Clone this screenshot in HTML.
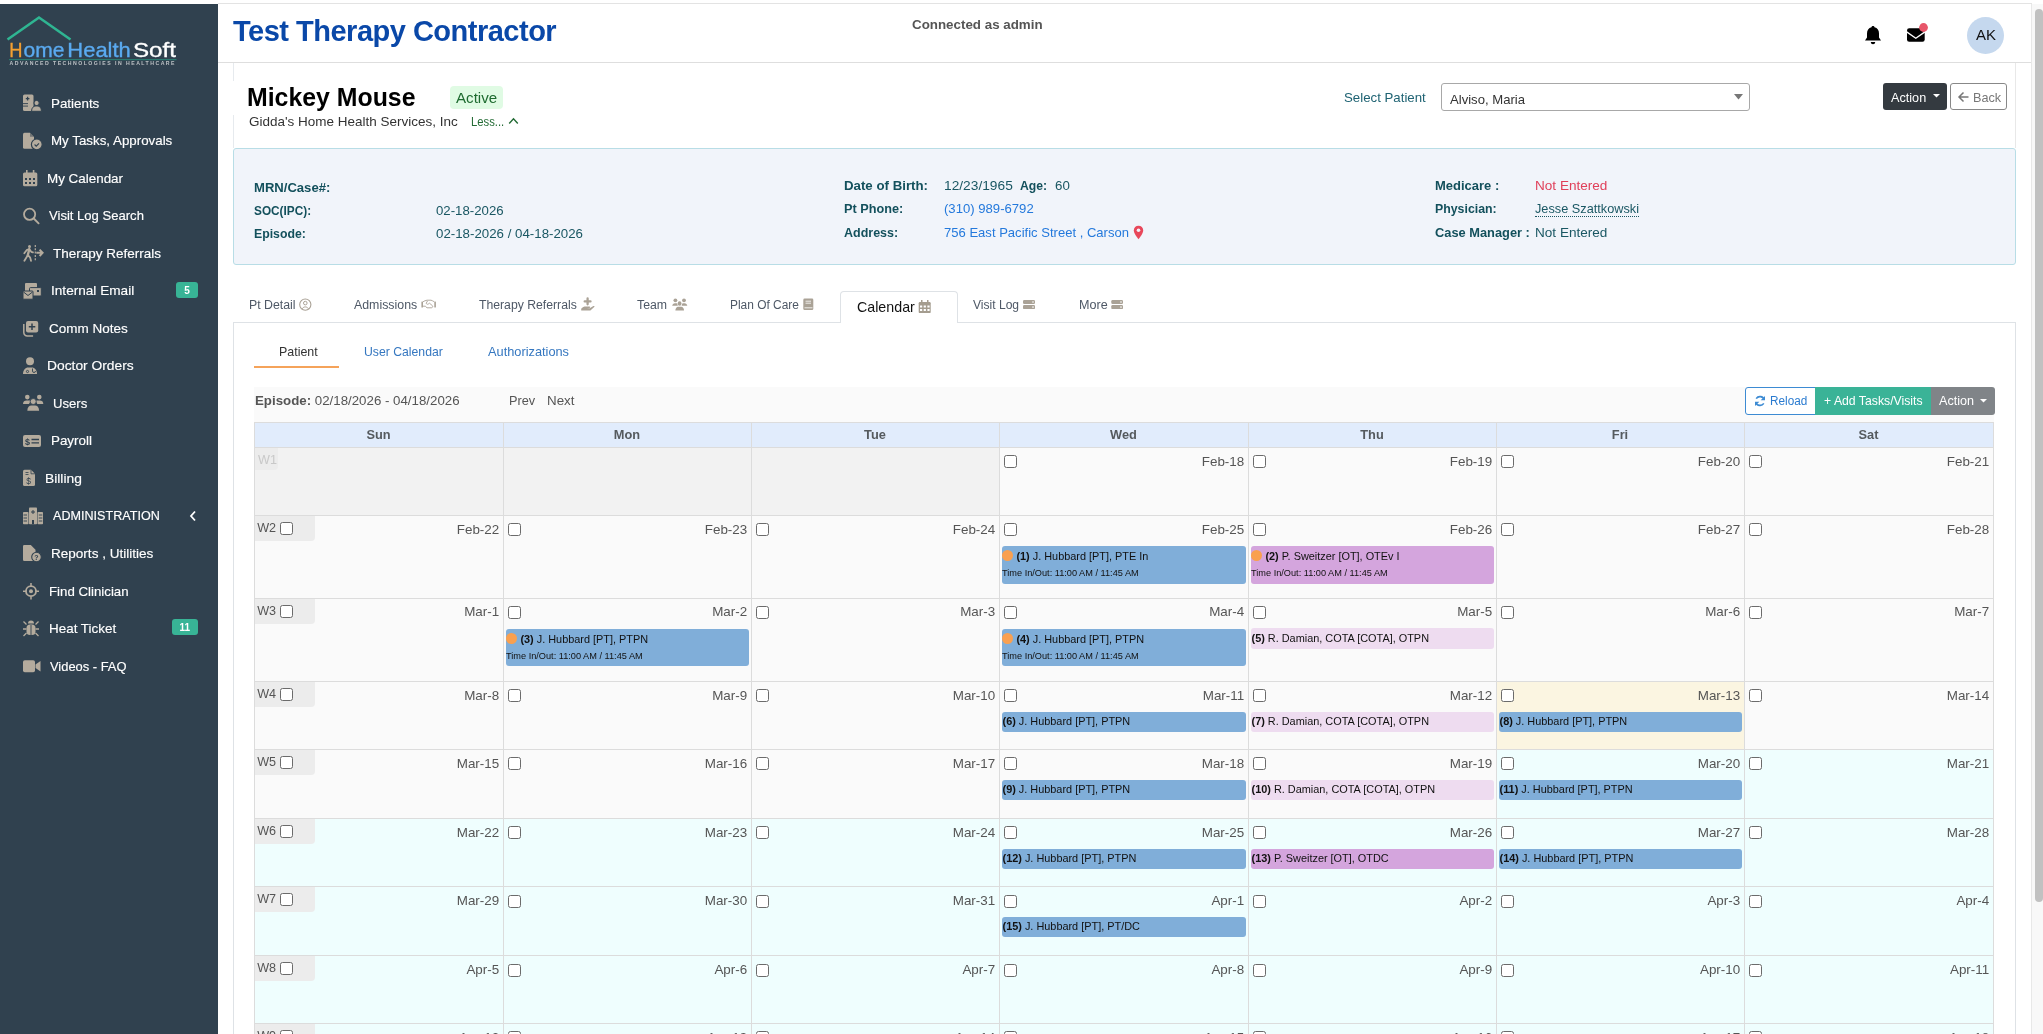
<!DOCTYPE html>
<html><head><meta charset="utf-8">
<style>
*{box-sizing:border-box;margin:0;padding:0}
html,body{width:2043px;height:1034px;overflow:hidden;background:#fff;font-family:"Liberation Sans",sans-serif;color:#212529}
.a{position:absolute}
.t{position:absolute;white-space:nowrap;line-height:1}
#topline{left:218px;top:3px;width:1814px;height:1px;background:#e3e3e3}
#side{left:0;top:4px;width:218px;height:1030px;background:#30414f}
#sbtrack{left:2031px;top:4px;width:12px;height:1030px;background:#f8f8f8;border-left:1px solid #e8e8e8}
#sbthumb{left:2035px;top:9px;width:8px;height:893px;background:#c1c1c1;border-radius:4px}
#hdrline{left:218px;top:62px;width:1813px;height:1px;background:#dedede}
.nav{position:absolute;white-space:nowrap;line-height:1;color:#fff;font-size:13.5px;-webkit-text-stroke:0.15px #fff}
.badge{position:absolute;background:#38b496;color:#fff;font-size:10px;font-weight:bold;text-align:center;border-radius:3px;line-height:17px;height:16px}
.lbl{position:absolute;white-space:nowrap;line-height:1;font-size:13.1px;font-weight:bold;color:#13505c}
.val{position:absolute;white-space:nowrap;line-height:1;font-size:13.3px;color:#1a5763}
.tab{position:absolute;white-space:nowrap;line-height:1;font-size:12.3px;color:#4e5866}
.ch{height:25px;line-height:26px;text-align:center;font-weight:bold;font-size:12.8px;color:#555a5e}
.dt{text-align:right;font-size:13.4px;line-height:1;color:#555}
.cb{width:13px;height:13px;border:1px solid #6b6b6b;border-radius:2.5px;background:#fff}
.wl{background:#ececec;border-radius:0 0 4px 0;font-size:12.6px;color:#555;line-height:1}
.wl span{position:absolute;left:3px}
.ev{border-radius:3px;overflow:hidden;color:#111;white-space:nowrap}
.et{position:absolute;font-size:10.9px;line-height:1}
.tio{position:absolute;left:0;font-size:9.2px;line-height:1}
.dot{position:absolute;width:11px;height:11px;border-radius:50%;background:#f9a050}
</style></head>
<body>
<div id="root" style="position:absolute;left:0;top:0;width:2043px;height:1034px;overflow:hidden;will-change:transform">
<div id="topline" class="a"></div>
<div id="side" class="a"></div>
<div id="hdrline" class="a"></div>

<!-- logo -->
<svg class="a" style="left:0;top:0" width="218" height="80" viewBox="0 0 218 80">
  <polyline points="7.5,39.5 39,17.5 70.5,39.5" fill="none" stroke="#2fb592" stroke-width="2.6" stroke-linejoin="miter"/>
  <g font-family="Liberation Sans" font-size="21" stroke-width="0.35" lengthAdjust="spacingAndGlyphs">
  <text x="9.2" y="57" fill="#f5a030" stroke="#f5a030" textLength="13.2" lengthAdjust="spacingAndGlyphs">H</text>
  <text x="23.6" y="57" fill="#5aaaf0" stroke="#5aaaf0" textLength="41" lengthAdjust="spacingAndGlyphs">ome</text>
  <text x="67.3" y="57" fill="#5aaaf0" stroke="#5aaaf0" textLength="63.5" lengthAdjust="spacingAndGlyphs">Health</text>
  <text x="133" y="57" fill="#ffffff" stroke="#ffffff" textLength="43" lengthAdjust="spacingAndGlyphs">Soft</text>
  </g>
  <rect x="9" y="59" width="167.5" height="1.2" fill="#2a7a70"/>
  <text x="9.5" y="65.3" font-family="Liberation Sans" font-size="5.2" font-weight="bold" fill="#bcc0c4" textLength="165" lengthAdjust="spacing">ADVANCED TECHNOLOGIES IN HEALTHCARE</text>
</svg>

<!-- nav -->
<svg class="a" style="left:0;top:0" width="218" height="700" viewBox="0 0 218 700">
<g fill="#b4ab9d">
  <!-- Patients -->
  <rect x="23" y="94.5" width="10.5" height="16.5" rx="1.5"/>
  <path d="M22.5 103.6h5.5M22.5 106.1h5.5" stroke="#30414f" stroke-width="0.9"/>
  <path d="M27.6 96.8v3.6M25.8 98.6h3.6" stroke="#30414f" stroke-width="1.3"/>
  <circle cx="36.6" cy="103" r="2.6" stroke="#30414f" stroke-width="1"/>
  <path d="M31.6 111.3 C31.6 107.5 33.5 106 36.6 106 C39.7 106 41.4 107.5 41.4 111.3Z" stroke="#30414f" stroke-width="1"/>
  <!-- My Tasks -->
  <path d="M24.5 132.8h5.5l4 4v12h-9.5a1.5 1.5 0 0 1-1.5-1.5v-13a1.5 1.5 0 0 1 1.5-1.5z"/>
  <path d="M30 132.8v4h4z" fill="#30414f" opacity="0.5"/>
  <circle cx="36.8" cy="144.4" r="5.4" stroke="#30414f" stroke-width="1.2"/>
  <path d="M34.6 144.5l1.6 1.6 2.8-2.8" fill="none" stroke="#30414f" stroke-width="1.1"/>
  <!-- My Calendar -->
  <rect x="23" y="172.5" width="14.3" height="13.7" rx="1.5"/>
  <rect x="26" y="170" width="1.6" height="3"/><rect x="32.8" y="170" width="1.6" height="3"/>
  <g fill="#30414f"><rect x="25" y="178" width="2" height="2"/><rect x="29" y="178" width="2" height="2"/><rect x="33" y="178" width="2" height="2"/><rect x="25" y="182" width="2" height="2"/><rect x="29" y="182" width="2" height="2"/><rect x="33" y="182" width="2" height="2"/></g>
  <!-- Search -->
  <circle cx="29.6" cy="214.3" r="5.6" fill="none" stroke="#b4ab9d" stroke-width="1.8"/>
  <path d="M33.8 218.5l4.8 4.8" stroke="#b4ab9d" stroke-width="1.9" stroke-linecap="round"/>
  <!-- Therapy Referrals -->
  <circle cx="29.5" cy="246.4" r="1.5"/>
  <path d="M29.3 249.2L27.8 255" stroke="#b4ab9d" stroke-width="2.4" stroke-linecap="round"/>
  <path d="M24.3 253.2l2.3-3 2.7-1 2 2.6 1.6 0.6M27.9 255l2.3 2.6 0.8 3.2M27.6 255.5l-3.2 5.3" fill="none" stroke="#b4ab9d" stroke-width="1.8" stroke-linecap="round" stroke-linejoin="round"/>
  <path d="M35.3 245v16" stroke="#b4ab9d" stroke-width="1.2" stroke-dasharray="2 1.3"/>
  <path d="M36.3 252.8h5.8M39.6 249.6l3 3.2-3 3.2" fill="none" stroke="#b4ab9d" stroke-width="2"/>
  <!-- Internal Email -->
  <rect x="25" y="283" width="12" height="9" rx="1"/>
  <rect x="29.5" y="287.6" width="11.8" height="8.4" rx="1" stroke="#30414f" stroke-width="1"/>
  <rect x="37" y="290" width="2" height="2" fill="#30414f"/>
  <rect x="23" y="291" width="10" height="8.2" rx="0.8" stroke="#30414f" stroke-width="1"/>
  <path d="M23.5 292l4.5 3.5 4.5-3.5" fill="none" stroke="#30414f" stroke-width="1"/>
  <!-- Comm Notes -->
  <path d="M23.8 324v8.5a3.5 3.5 0 0 0 3.5 3.5h5.8" fill="none" stroke="#b4ab9d" stroke-width="1.5"/>
  <rect x="26" y="320.9" width="12.2" height="11.7" rx="2"/>
  <path d="M32 323.5v6.5M28.8 326.8h6.5" stroke="#30414f" stroke-width="1.5"/>
  <!-- Doctor Orders -->
  <circle cx="30" cy="361.3" r="4"/>
  <path d="M23 374c0-4 2.5-6.5 5-6.5h4c2.5 0 5 2.5 5 6.5z"/>
  <circle cx="27.5" cy="371.5" r="1.1" fill="none" stroke="#30414f" stroke-width="0.9"/>
  <path d="M32.5 368.5v2.5a1.5 1.5 0 0 0 3 0" fill="none" stroke="#30414f" stroke-width="0.9"/>
  <!-- Users -->
  <circle cx="27.3" cy="397.1" r="2.3"/><circle cx="39.3" cy="397.1" r="2.3"/>
  <path d="M23 404c0-2.5 1.5-3.5 3.5-3.5h2.5c1 0 1.5 0.5 1.5 0.5l-1.5 3z"/>
  <path d="M43.3 404c0-2.5-1.5-3.5-3.5-3.5h-2.5c-1 0-1.5 0.5-1.5 0.5l1.5 3z"/>
  <circle cx="33.2" cy="401.5" r="3" stroke="#30414f" stroke-width="0.8"/>
  <path d="M27.3 410.7c0-3.5 2-5.2 4-5.2h3.8c2 0 4 1.7 4 5.2z"/>
  <!-- Payroll -->
  <rect x="23" y="434.9" width="18" height="12.1" rx="2"/>
  <text x="25" y="445" font-family="Liberation Sans" font-size="9" font-weight="bold" fill="#30414f">$</text>
  <path d="M31.5 439.5h7.5M31.5 442.8h7.5" stroke="#30414f" stroke-width="1.3"/>
  <!-- Billing -->
  <path d="M24.5 469.8h6.5l4 4v10.7a1.5 1.5 0 0 1-1.5 1.5h-9a1.5 1.5 0 0 1-1.5-1.5v-13.2a1.5 1.5 0 0 1 1.5-1.5z"/>
  <path d="M31 469.8v4h4" fill="none" stroke="#30414f" stroke-width="0.8"/>
  <path d="M25.5 472.5h3M25.5 474.5h3" stroke="#30414f" stroke-width="0.8"/>
  <text x="26.3" y="484" font-family="Liberation Sans" font-size="8.5" fill="#30414f">$</text>
  <!-- Administration -->
  <rect x="23" y="512" width="5.5" height="12.2" rx="0.8"/>
  <rect x="37.5" y="512" width="5.5" height="12.2" rx="0.8"/>
  <rect x="29" y="507.6" width="8" height="16.6" rx="0.8"/>
  <path d="M23.5 515h3.5M23.5 518h3.5M23.5 521h3.5M38.8 515h3.5M38.8 518h3.5M38.8 521h3.5" stroke="#30414f" stroke-width="0.9"/>
  <path d="M33 510v4M31 512h4" stroke="#30414f" stroke-width="1"/>
  <rect x="32" y="520" width="2" height="4.2" fill="#30414f"/>
  <!-- Reports -->
  <path d="M24.3 545h6.5l4.7 4.7v11.4h-11.2a1.3 1.3 0 0 1-1.3-1.3v-13.5a1.3 1.3 0 0 1 1.3-1.3z"/>
  <circle cx="36.5" cy="557" r="4.8" stroke="#30414f" stroke-width="1.1"/>
  <text x="34.2" y="560" font-family="Liberation Sans" font-size="7" font-weight="bold" fill="#30414f">?</text>
  <!-- Find Clinician -->
  <circle cx="31" cy="591.2" r="5" fill="none" stroke="#b4ab9d" stroke-width="1.8"/>
  <circle cx="31" cy="591.2" r="2"/>
  <path d="M31 583v3M31 596.5v3M23 591.2h3M36 591.2h3" stroke="#b4ab9d" stroke-width="1.5"/>
  <!-- Heat Ticket bug -->
  <path d="M28 623.5a3 3 0 0 1 6 0z"/>
  <rect x="26.5" y="624.5" width="9" height="10.5" rx="3.5"/>
  <path d="M31 625v10" stroke="#30414f" stroke-width="0.9"/>
  <path d="M23.5 621.5l3 3M38.5 621.5l-3 3M23 629h3.5M39 629h-3.5M23.5 636l3-3M38.5 636l-3-3" stroke="#b4ab9d" stroke-width="1.3"/>
  <!-- Videos -->
  <rect x="23" y="660.3" width="12" height="11.9" rx="1.8"/>
  <path d="M35.5 664.5l5-3.5v10.5l-5-3.5z"/>
</g>
</svg>

<div class="nav" style="left:51px;top:96.5px;transform:scaleX(0.9901);transform-origin:0 0">Patients</div>
<div class="nav" style="left:51px;top:134px;transform:scaleX(0.9877);transform-origin:0 0">My Tasks, Approvals</div>
<div class="nav" style="left:46.5px;top:171.5px;transform:scaleX(0.9931);transform-origin:0 0">My Calendar</div>
<div class="nav" style="left:48.5px;top:209px;transform:scaleX(0.9678);transform-origin:0 0">Visit Log Search</div>
<div class="nav" style="left:52.8px;top:246.7px;transform:scaleX(0.9996);transform-origin:0 0">Therapy Referrals</div>
<div class="nav" style="left:51.2px;top:284.2px;transform:scaleX(1.0079);transform-origin:0 0">Internal Email</div>
<div class="nav" style="left:48.9px;top:321.8px;transform:scaleX(0.9992);transform-origin:0 0">Comm Notes</div>
<div class="nav" style="left:46.7px;top:359.3px;transform:scaleX(1.0226);transform-origin:0 0">Doctor Orders</div>
<div class="nav" style="left:52.9px;top:396.9px;transform:scaleX(0.9726);transform-origin:0 0">Users</div>
<div class="nav" style="left:51.2px;top:434.4px;transform:scaleX(0.9911);transform-origin:0 0">Payroll</div>
<div class="nav" style="left:44.5px;top:472px;transform:scaleX(1.0241);transform-origin:0 0">Billing</div>
<div class="nav" style="left:52.5px;top:510.1px;font-size:12.7px;transform:scaleX(0.9925);transform-origin:0 0">ADMINISTRATION</div>
<div class="nav" style="left:51.2px;top:547px;transform:scaleX(1.0026);transform-origin:0 0">Reports , Utilities</div>
<div class="nav" style="left:48.9px;top:584.6px;transform:scaleX(0.9821);transform-origin:0 0">Find Clinician</div>
<div class="nav" style="left:48.9px;top:622.1px;transform:scaleX(0.9951);transform-origin:0 0">Heat Ticket</div>
<div class="nav" style="left:50.3px;top:659.7px;transform:scaleX(0.9557);transform-origin:0 0">Videos - FAQ</div>
<div class="badge" style="left:176px;top:282px;width:22px">5</div>
<div class="badge" style="left:171.5px;top:619px;width:26.5px">11</div>
<svg class="a" style="left:189px;top:510px" width="8" height="12"><polyline points="6,1.5 2,6 6,10.5" fill="none" stroke="#fff" stroke-width="1.8"/></svg>

<!-- header -->
<div class="t" style="left:233px;top:16.8px;font-size:29px;letter-spacing:-0.5px;font-weight:bold;color:#0a48a8">Test Therapy Contractor</div>
<div class="t" style="left:911.5px;top:18px;font-size:13.3px;font-weight:bold;color:#555;transform:scaleX(1.0043);transform-origin:0 0">Connected as admin</div>

<!-- patient header -->
<div class="a" style="left:233px;top:63px;width:1px;height:18px;background:#e6eaee"></div>
<div class="a" style="left:233px;top:115px;width:1px;height:33px;background:#e6eaee"></div>
<div class="a" style="left:2015px;top:63px;width:1px;height:85px;background:#e8e8e8"></div>
<div class="t" style="left:246.5px;top:85.6px;font-size:24.85px;font-weight:bold;color:#000;transform:scaleX(1.0003);transform-origin:0 0">Mickey Mouse</div>
<div class="a" style="left:450px;top:86px;width:53px;height:23px;background:#e0fbe4;border-radius:4px"></div>
<div class="t" style="left:455.5px;top:90.3px;font-size:15px;color:#1e6b30;transform:scaleX(1.0083);transform-origin:0 0">Active</div>
<div class="t" style="left:249.3px;top:114.6px;font-size:13.4px;color:#333;transform:scaleX(1.0071);transform-origin:0 0">Gidda's Home Health Services, Inc</div>
<div class="t" style="left:470.8px;top:115.8px;font-size:12px;color:#236b35;transform:scaleX(0.9389);transform-origin:0 0">Less...</div>
<svg class="a" style="left:508px;top:116px" width="12" height="9"><polyline points="1.2,7.5 5.5,2.8 9.8,7.5" fill="none" stroke="#236b35" stroke-width="1.4"/></svg>

<div class="t" style="left:1344.4px;top:90.6px;font-size:13.2px;color:#1f6373;transform:scaleX(1.0052);transform-origin:0 0">Select Patient</div>
<div class="a" style="left:1441px;top:83px;width:309px;height:28px;border:1px solid #a8a8a8;border-radius:3px;background:#fff"></div>
<div class="t" style="left:1450.2px;top:92.5px;font-size:13.1px;color:#333;transform:scaleX(1.0006);transform-origin:0 0">Alviso, Maria</div>
<svg class="a" style="left:1734px;top:94px" width="10" height="7"><polygon points="0,0 9,0 4.5,5.5" fill="#777"/></svg>
<div class="a" style="left:1883px;top:83px;width:64px;height:27px;background:#343a40;border-radius:3px"></div>
<div class="t" style="left:1891px;top:91.7px;font-size:12.6px;color:#fff;transform:scaleX(1.0053);transform-origin:0 0">Action</div>
<svg class="a" style="left:1932.5px;top:93.5px" width="8" height="5"><polygon points="0,0 7,0 3.5,3.5" fill="#fff"/></svg>
<div class="a" style="left:1950px;top:83px;width:57px;height:27px;border:1px solid #888;border-radius:3px;background:#fff"></div>
<svg class="a" style="left:1957px;top:91px" width="13" height="12"><path d="M11.5 6H2M6.5 1.5L2 6l4.5 4.5" fill="none" stroke="#777" stroke-width="1.5"/></svg>
<div class="t" style="left:1972.7px;top:91.6px;font-size:12.7px;color:#777;transform:scaleX(0.9993);transform-origin:0 0">Back</div>

<!-- header icons -->
<svg class="a" style="left:1862px;top:24px" width="22" height="22" viewBox="0 0 22 22"><path d="M11 2 C12 2 12.5 2.7 12.5 3.3 C15.5 4 17 6.5 17 9.5 L17 13.5 L19 16.5 L3 16.5 L5 13.5 L5 9.5 C5 6.5 6.5 4 9.5 3.3 C9.5 2.7 10 2 11 2 Z" fill="#000"/><path d="M8.8 18 L13.2 18 C13.2 19.3 12.2 20.3 11 20.3 C9.8 20.3 8.8 19.3 8.8 18Z" fill="#000"/></svg>
<svg class="a" style="left:1900px;top:20px" width="32" height="26" viewBox="1900 20 32 26"><rect x="1907" y="28.2" width="17.7" height="13.6" rx="2.2" fill="#000"/><polyline points="1906.3,31.6 1915.8,38.3 1925.3,31.6" fill="none" stroke="#fff" stroke-width="1.3"/><circle cx="1923.5" cy="27.5" r="4.4" fill="#e8566a"/></svg>
<div class="a" style="left:1967px;top:17px;width:37px;height:37px;border-radius:50%;background:#c5d8ee"></div>
<div class="t" style="left:1967.5px;top:27.2px;width:37px;text-align:center;font-size:15px;color:#111">AK</div>

<!-- info panel -->
<div class="a" style="left:233px;top:148px;width:1783px;height:117px;background:#f1f4fa;border:1px solid #b8dde6;border-radius:3px"></div>
<div class="lbl" style="left:254.4px;top:181.2px;transform:scaleX(0.9986);transform-origin:0 0">MRN/Case#:</div>
<div class="lbl" style="left:254.4px;top:204.1px;transform:scaleX(0.9021);transform-origin:0 0">SOC(IPC):</div>
<div class="lbl" style="left:254.4px;top:227px;transform:scaleX(0.9386);transform-origin:0 0">Episode:</div>
<div class="val" style="left:435.6px;top:204.1px;transform:scaleX(0.9937);transform-origin:0 0">02-18-2026</div>
<div class="val" style="left:435.6px;top:227px;transform:scaleX(0.9992);transform-origin:0 0">02-18-2026 / 04-18-2026</div>
<div class="lbl" style="left:844px;top:179.3px;transform:scaleX(1.0128);transform-origin:0 0">Date of Birth:</div>
<div class="lbl" style="left:844px;top:202.2px;transform:scaleX(0.9688);transform-origin:0 0">Pt Phone:</div>
<div class="lbl" style="left:844px;top:226.2px;transform:scaleX(0.9548);transform-origin:0 0">Address:</div>
<div class="val" style="left:944px;top:179.3px;transform:scaleX(1.0336);transform-origin:0 0">12/23/1965</div>
<div class="lbl" style="left:1020.4px;top:179.3px;transform:scaleX(0.9310);transform-origin:0 0">Age:</div>
<div class="val" style="left:1055px;top:179.3px">60</div>
<div class="val" style="left:944px;top:202.2px;color:#2479dc;transform:scaleX(0.9864);transform-origin:0 0">(310) 989-6792</div>
<div class="val" style="left:944px;top:226.2px;color:#2479dc;transform:scaleX(0.9816);transform-origin:0 0">756 East Pacific Street , Carson</div>
<svg class="a" style="left:1133px;top:225px" width="11" height="15" viewBox="0 0 11 15"><path d="M5.5 0.8C8.2 0.8 10.2 2.8 10.2 5.4C10.2 8.5 5.5 14.2 5.5 14.2C5.5 14.2 0.8 8.5 0.8 5.4C0.8 2.8 2.8 0.8 5.5 0.8Z" fill="#e8475a"/><circle cx="5.5" cy="5.3" r="1.8" fill="#f0f4fa"/></svg>
<div class="lbl" style="left:1435px;top:179.3px;transform:scaleX(0.9913);transform-origin:0 0">Medicare :</div>
<div class="lbl" style="left:1435px;top:202.2px;transform:scaleX(0.9420);transform-origin:0 0">Physician:</div>
<div class="lbl" style="left:1435px;top:226.2px;transform:scaleX(0.9804);transform-origin:0 0">Case Manager :</div>
<div class="val" style="left:1535px;top:179.3px;color:#e0405a;transform:scaleX(1.0202);transform-origin:0 0">Not Entered</div>
<div class="val" style="left:1535px;top:202.2px;transform:scaleX(0.9573);transform-origin:0 0">Jesse Szattkowski</div>
<div class="a" style="left:1535px;top:215.5px;width:104px;height:0;border-top:1px dotted #1a5763"></div>
<div class="val" style="left:1535px;top:226.2px;transform:scaleX(1.0202);transform-origin:0 0">Not Entered</div>

<!-- tabs -->
<div class="a" style="left:233px;top:321.5px;width:1783px;height:1px;background:#dee2e6"></div>
<div class="a" style="left:840.4px;top:290.5px;width:117.5px;height:32px;background:#fff;border:1px solid #dee2e6;border-bottom:none;border-radius:4px 4px 0 0"></div>
<div class="tab" style="left:249px;top:298.7px;transform:scaleX(1.0025);transform-origin:0 0">Pt Detail</div>
<div class="tab" style="left:354.4px;top:298.7px;transform:scaleX(1.0052);transform-origin:0 0">Admissions</div>
<div class="tab" style="left:479.3px;top:298.7px;transform:scaleX(0.9937);transform-origin:0 0">Therapy Referrals</div>
<div class="tab" style="left:637.4px;top:298.7px;transform:scaleX(1.0007);transform-origin:0 0">Team</div>
<div class="tab" style="left:730.4px;top:298.7px;transform:scaleX(0.9705);transform-origin:0 0">Plan Of Care</div>
<div class="tab" style="left:856.5px;top:299.7px;font-size:14.2px;color:#111;transform:scaleX(1.0039);transform-origin:0 0">Calendar</div>
<div class="tab" style="left:973px;top:298.7px;transform:scaleX(0.9818);transform-origin:0 0">Visit Log</div>
<div class="tab" style="left:1078.5px;top:298.7px;transform:scaleX(1.0239);transform-origin:0 0">More</div>
<svg class="a" style="left:230px;top:290px" width="920" height="30" viewBox="230 290 920 30">
<g fill="#aaa296">
  <!-- Pt Detail circle user -->
  <circle cx="305.3" cy="304.6" r="5.6" fill="none" stroke="#aaa296" stroke-width="1.1"/>
  <circle cx="305.3" cy="303.1" r="1.8" fill="none" stroke="#aaa296" stroke-width="1"/>
  <path d="M302 309.3c0.6-1.6 1.7-2.4 3.3-2.4s2.7 0.8 3.3 2.4" fill="none" stroke="#aaa296" stroke-width="1"/>
  <!-- Admissions handshake -->
  <rect x="421.4" y="301.4" width="1.6" height="6.2" rx="0.5"/>
  <rect x="434.3" y="301.4" width="1.6" height="6.2" rx="0.5"/>
  <path d="M423 301.8C424.5 301 425.5 300.3 427 300.2H431C432 300.3 433 301.2 434.3 301.8M423 306.2H425.3L427 307.8H431.5C432.6 307.6 433 306.6 432.5 305.8L429.5 303.2M427.5 301L426.2 303.2C426.5 304.3 427.5 304.6 428.3 304L429.5 303.2" fill="none" stroke="#aaa296" stroke-width="0.9"/>
  <!-- Therapy Referrals hand holding medical -->
  <path d="M587.6 298.5v5.8M584.7 301.4h5.8" stroke="#aaa296" stroke-width="2.3" stroke-linecap="round"/>
  <path d="M581.2 308.8c1.2-1.6 3-2.2 4.5-2.2h3.8c0.8 0 1 1.2 0 1.4h-3l3.2 0.3 3.7-2.2c0.8-0.4 1.5 0.4 0.8 1l-3.8 3.4h-9.2z"/>
  <!-- Team users -->
  <circle cx="675.4" cy="300.3" r="1.9"/><circle cx="684" cy="300.3" r="1.9"/>
  <ellipse cx="679.6" cy="303.5" rx="1.9" ry="2.3"/>
  <path d="M672.2 305.8c0.3-1.5 1.2-2.6 2.8-2.6h1.2c0.8 0 1.2 0.5 1.3 1.2l0.3 1.4z M687.3 305.8c-0.3-1.5-1.2-2.6-2.8-2.6h-1.2c-0.8 0-1.2 0.5-1.3 1.2l-0.3 1.4z"/>
  <path d="M675.4 310.4c0-1.8 1.2-3.6 2.6-3.6h3.4c1.4 0 2.6 1.8 2.6 3.6z"/>
  <!-- Plan of care book -->
  <rect x="803.3" y="298.6" width="10" height="11.5" rx="1.3"/>
  <path d="M805.5 301.2h5.5M805.5 303.2h5.5M804.5 307.8h8" stroke="#fff" stroke-width="0.8"/>
  <!-- Calendar -->
  <g fill="#a49c8f">
  <rect x="918.7" y="302" width="12" height="11.1" rx="1.2"/>
  <rect x="921" y="300" width="1.5" height="2.5"/><rect x="927" y="300" width="1.5" height="2.5"/>
  <g fill="#fff"><rect x="920" y="305.5" width="2.2" height="2"/><rect x="923.7" y="305.5" width="2.2" height="2"/><rect x="927.4" y="305.5" width="2.2" height="2"/><rect x="920" y="309" width="2.2" height="2"/><rect x="923.7" y="309" width="2.2" height="2"/><rect x="927.4" y="309" width="2.2" height="2"/></g>
  </g>
  <!-- Visit Log server -->
  <rect x="1023" y="300" width="12" height="4" rx="1.2"/><rect x="1023" y="305.1" width="12" height="4" rx="1.2"/>
  <circle cx="1033" cy="302" r="0.8" fill="#fff"/><circle cx="1033" cy="307.1" r="0.8" fill="#fff"/>
  <!-- More -->
  <rect x="1111.3" y="300" width="11.7" height="4" rx="1.2"/><rect x="1111.3" y="305.1" width="11.7" height="4" rx="1.2"/>
  <circle cx="1121" cy="302" r="0.8" fill="#fff"/><circle cx="1121" cy="307.1" r="0.8" fill="#fff"/>
</g>
</svg>

<div class="a" style="left:233px;top:322px;width:1px;height:720px;background:#dee2e6"></div>
<div class="a" style="left:2015px;top:322px;width:1px;height:720px;background:#dee2e6"></div>

<!-- subtabs -->
<div class="tab" style="left:279.4px;top:345.6px;font-size:12.4px;color:#333;transform:scaleX(1.0032);transform-origin:0 0">Patient</div>
<div class="a" style="left:254.2px;top:365.5px;width:84.5px;height:2px;background:#f5a35a"></div>
<div class="tab" style="left:363.9px;top:345.6px;font-size:12.4px;color:#3577c0;transform:scaleX(0.9863);transform-origin:0 0">User Calendar</div>
<div class="tab" style="left:488.2px;top:345.6px;font-size:12.4px;color:#3577c0;transform:scaleX(1.0314);transform-origin:0 0">Authorizations</div>

<!-- toolbar -->
<div class="a" style="left:254px;top:387px;width:1740px;height:36px;background:#fafafa"></div>
<div class="tab" style="left:254.5px;top:395.3px;font-size:12.6px;color:#555;transform:scaleX(1.0549);transform-origin:0 0"><b>Episode:</b> 02/18/2026 - 04/18/2026</div>
<div class="tab" style="left:508.8px;top:395.3px;font-size:12.7px;color:#555;transform:scaleX(1.0002);transform-origin:0 0">Prev</div>
<div class="tab" style="left:546.7px;top:395.3px;font-size:12.7px;color:#555;transform:scaleX(1.0539);transform-origin:0 0">Next</div>
<div class="a" style="left:1745px;top:387px;width:70.5px;height:27.5px;border:1px solid #3d8bd3;border-radius:3px 0 0 3px;background:#fff"></div>
<svg class="a" style="left:1753.5px;top:394.5px" width="12" height="12" viewBox="0 0 12 12"><path d="M10.2 4.6A4.5 4.5 0 0 0 2.2 3.6M1.8 7.4A4.5 4.5 0 0 0 9.8 8.4" fill="none" stroke="#3d8bd3" stroke-width="1.6"/><path d="M11 1v4.3H6.7z M1 11V6.7h4.3z" fill="#3d8bd3"/></svg>
<div class="tab" style="left:1769.5px;top:395.3px;font-size:12px;color:#2a7bd0;transform:scaleX(0.9808);transform-origin:0 0">Reload</div>
<div class="a" style="left:1815.3px;top:387px;width:116px;height:27.5px;background:#3ab397"></div>
<div class="tab" style="left:1824px;top:395.3px;font-size:12.1px;color:#fff;transform:scaleX(1.0126);transform-origin:0 0">+ Add Tasks/Visits</div>
<div class="a" style="left:1931.1px;top:387px;width:63.8px;height:27.5px;background:#808488;border-radius:0 3px 3px 0"></div>
<div class="tab" style="left:1939.2px;top:395.3px;font-size:12.6px;color:#fff;transform:scaleX(0.9996);transform-origin:0 0">Action</div>
<svg class="a" style="left:1979.5px;top:399px" width="8" height="5"><polygon points="0,0 7,0 3.5,3.5" fill="#fff"/></svg>

<div class="a" style="left:254px;top:422px;width:1740px;height:25px;background:#e1ecfc"></div>
<div class="a ch" style="left:254px;top:422px;width:249px">Sun</div>
<div class="a ch" style="left:503px;top:422px;width:248px">Mon</div>
<div class="a ch" style="left:751px;top:422px;width:248px">Tue</div>
<div class="a ch" style="left:999px;top:422px;width:249px">Wed</div>
<div class="a ch" style="left:1248px;top:422px;width:248px">Thu</div>
<div class="a ch" style="left:1496px;top:422px;width:248px">Fri</div>
<div class="a ch" style="left:1744px;top:422px;width:249px">Sat</div>
<div class="a" style="left:254px;top:447px;width:249px;height:68px;background:#f2f2f2"></div>
<div class="a" style="left:503px;top:447px;width:248px;height:68px;background:#f2f2f2"></div>
<div class="a" style="left:751px;top:447px;width:248px;height:68px;background:#f2f2f2"></div>
<div class="a" style="left:999px;top:447px;width:249px;height:68px;background:#fafafa"></div>
<div class="a dt" style="left:999px;top:454.79999999999995px;width:245.2px">Feb-18</div>
<div class="a cb" style="left:1004px;top:455.29999999999995px"></div>
<div class="a" style="left:1248px;top:447px;width:248px;height:68px;background:#fafafa"></div>
<div class="a dt" style="left:1248px;top:454.79999999999995px;width:244.2px">Feb-19</div>
<div class="a cb" style="left:1253px;top:455.29999999999995px"></div>
<div class="a" style="left:1496px;top:447px;width:248px;height:68px;background:#fafafa"></div>
<div class="a dt" style="left:1496px;top:454.79999999999995px;width:244.2px">Feb-20</div>
<div class="a cb" style="left:1501px;top:455.29999999999995px"></div>
<div class="a" style="left:1744px;top:447px;width:249px;height:68px;background:#fafafa"></div>
<div class="a dt" style="left:1744px;top:454.79999999999995px;width:245.2px">Feb-21</div>
<div class="a cb" style="left:1749px;top:455.29999999999995px"></div>
<div class="a wl" style="left:255px;top:448px;width:23px;height:22px;color:#c8c8c8"><span style="top:6px">W1</span></div>
<div class="a" style="left:254px;top:515px;width:249px;height:83px;background:#fafafa"></div>
<div class="a dt" style="left:254px;top:522.8px;width:245.2px">Feb-22</div>
<div class="a" style="left:503px;top:515px;width:248px;height:83px;background:#fafafa"></div>
<div class="a dt" style="left:503px;top:522.8px;width:244.2px">Feb-23</div>
<div class="a cb" style="left:508px;top:523.3px"></div>
<div class="a" style="left:751px;top:515px;width:248px;height:83px;background:#fafafa"></div>
<div class="a dt" style="left:751px;top:522.8px;width:244.2px">Feb-24</div>
<div class="a cb" style="left:756px;top:523.3px"></div>
<div class="a" style="left:999px;top:515px;width:249px;height:83px;background:#fafafa"></div>
<div class="a dt" style="left:999px;top:522.8px;width:245.2px">Feb-25</div>
<div class="a cb" style="left:1004px;top:523.3px"></div>
<div class="a ev" style="left:1002px;top:546.1px;width:243.5px;height:37.6px;background:#80aed9"><i class="dot" style="left:-0.2px;top:4.1px"></i><div class="et" style="left:14.4px;top:5.2px"><b>(1)</b> J. Hubbard [PT], PTE In</div><div class="tio" style="top:23.4px">Time In/Out: 11:00 AM / 11:45 AM</div></div>
<div class="a" style="left:1248px;top:515px;width:248px;height:83px;background:#fafafa"></div>
<div class="a dt" style="left:1248px;top:522.8px;width:244.2px">Feb-26</div>
<div class="a cb" style="left:1253px;top:523.3px"></div>
<div class="a ev" style="left:1251px;top:546.1px;width:242.5px;height:37.6px;background:#d4a5dd"><i class="dot" style="left:-0.2px;top:4.1px"></i><div class="et" style="left:14.4px;top:5.2px"><b>(2)</b> P. Sweitzer [OT], OTEv I</div><div class="tio" style="top:23.4px">Time In/Out: 11:00 AM / 11:45 AM</div></div>
<div class="a" style="left:1496px;top:515px;width:248px;height:83px;background:#fafafa"></div>
<div class="a dt" style="left:1496px;top:522.8px;width:244.2px">Feb-27</div>
<div class="a cb" style="left:1501px;top:523.3px"></div>
<div class="a" style="left:1744px;top:515px;width:249px;height:83px;background:#fafafa"></div>
<div class="a dt" style="left:1744px;top:522.8px;width:245.2px">Feb-28</div>
<div class="a cb" style="left:1749px;top:523.3px"></div>
<div class="a wl" style="left:255px;top:516px;width:60px;height:25px"><span style="top:5.9px;left:2.2px">W2</span></div>
<div class="a cb" style="left:280.3px;top:521.8px"></div>
<div class="a" style="left:254px;top:598px;width:249px;height:83px;background:#fafafa"></div>
<div class="a dt" style="left:254px;top:605.4px;width:245.2px">Mar-1</div>
<div class="a" style="left:503px;top:598px;width:248px;height:83px;background:#fafafa"></div>
<div class="a dt" style="left:503px;top:605.4px;width:244.2px">Mar-2</div>
<div class="a cb" style="left:508px;top:605.9px"></div>
<div class="a ev" style="left:506px;top:628.7px;width:242.5px;height:37.6px;background:#80aed9"><i class="dot" style="left:-0.2px;top:4.1px"></i><div class="et" style="left:14.4px;top:5.2px"><b>(3)</b> J. Hubbard [PT], PTPN</div><div class="tio" style="top:23.4px">Time In/Out: 11:00 AM / 11:45 AM</div></div>
<div class="a" style="left:751px;top:598px;width:248px;height:83px;background:#fafafa"></div>
<div class="a dt" style="left:751px;top:605.4px;width:244.2px">Mar-3</div>
<div class="a cb" style="left:756px;top:605.9px"></div>
<div class="a" style="left:999px;top:598px;width:249px;height:83px;background:#fafafa"></div>
<div class="a dt" style="left:999px;top:605.4px;width:245.2px">Mar-4</div>
<div class="a cb" style="left:1004px;top:605.9px"></div>
<div class="a ev" style="left:1002px;top:628.7px;width:243.5px;height:37.6px;background:#80aed9"><i class="dot" style="left:-0.2px;top:4.1px"></i><div class="et" style="left:14.4px;top:5.2px"><b>(4)</b> J. Hubbard [PT], PTPN</div><div class="tio" style="top:23.4px">Time In/Out: 11:00 AM / 11:45 AM</div></div>
<div class="a" style="left:1248px;top:598px;width:248px;height:83px;background:#fafafa"></div>
<div class="a dt" style="left:1248px;top:605.4px;width:244.2px">Mar-5</div>
<div class="a cb" style="left:1253px;top:605.9px"></div>
<div class="a ev" style="left:1251px;top:628.3px;width:242.5px;height:20.5px;background:#eedcf0"><div class="et" style="left:0.5px;top:4.6px"><b>(5)</b> R. Damian, COTA [COTA], OTPN</div></div>
<div class="a" style="left:1496px;top:598px;width:248px;height:83px;background:#fafafa"></div>
<div class="a dt" style="left:1496px;top:605.4px;width:244.2px">Mar-6</div>
<div class="a cb" style="left:1501px;top:605.9px"></div>
<div class="a" style="left:1744px;top:598px;width:249px;height:83px;background:#fafafa"></div>
<div class="a dt" style="left:1744px;top:605.4px;width:245.2px">Mar-7</div>
<div class="a cb" style="left:1749px;top:605.9px"></div>
<div class="a wl" style="left:255px;top:599px;width:60px;height:25px"><span style="top:5.9px;left:2.2px">W3</span></div>
<div class="a cb" style="left:280.3px;top:604.8px"></div>
<div class="a" style="left:254px;top:681px;width:249px;height:68px;background:#fafafa"></div>
<div class="a dt" style="left:254px;top:688.6999999999999px;width:245.2px">Mar-8</div>
<div class="a" style="left:503px;top:681px;width:248px;height:68px;background:#fafafa"></div>
<div class="a dt" style="left:503px;top:688.6999999999999px;width:244.2px">Mar-9</div>
<div class="a cb" style="left:508px;top:689.1999999999999px"></div>
<div class="a" style="left:751px;top:681px;width:248px;height:68px;background:#fafafa"></div>
<div class="a dt" style="left:751px;top:688.6999999999999px;width:244.2px">Mar-10</div>
<div class="a cb" style="left:756px;top:689.1999999999999px"></div>
<div class="a" style="left:999px;top:681px;width:249px;height:68px;background:#fafafa"></div>
<div class="a dt" style="left:999px;top:688.6999999999999px;width:245.2px">Mar-11</div>
<div class="a cb" style="left:1004px;top:689.1999999999999px"></div>
<div class="a ev" style="left:1002px;top:711.5999999999999px;width:243.5px;height:20.5px;background:#80aed9"><div class="et" style="left:0.5px;top:4.6px"><b>(6)</b> J. Hubbard [PT], PTPN</div></div>
<div class="a" style="left:1248px;top:681px;width:248px;height:68px;background:#fafafa"></div>
<div class="a dt" style="left:1248px;top:688.6999999999999px;width:244.2px">Mar-12</div>
<div class="a cb" style="left:1253px;top:689.1999999999999px"></div>
<div class="a ev" style="left:1251px;top:711.5999999999999px;width:242.5px;height:20.5px;background:#eedcf0"><div class="et" style="left:0.5px;top:4.6px"><b>(7)</b> R. Damian, COTA [COTA], OTPN</div></div>
<div class="a" style="left:1496px;top:681px;width:248px;height:68px;background:#fbf5e1"></div>
<div class="a dt" style="left:1496px;top:688.6999999999999px;width:244.2px">Mar-13</div>
<div class="a cb" style="left:1501px;top:689.1999999999999px"></div>
<div class="a ev" style="left:1499px;top:711.5999999999999px;width:242.5px;height:20.5px;background:#80aed9"><div class="et" style="left:0.5px;top:4.6px"><b>(8)</b> J. Hubbard [PT], PTPN</div></div>
<div class="a" style="left:1744px;top:681px;width:249px;height:68px;background:#fafafa"></div>
<div class="a dt" style="left:1744px;top:688.6999999999999px;width:245.2px">Mar-14</div>
<div class="a cb" style="left:1749px;top:689.1999999999999px"></div>
<div class="a wl" style="left:255px;top:682px;width:60px;height:25px"><span style="top:5.9px;left:2.2px">W4</span></div>
<div class="a cb" style="left:280.3px;top:687.8px"></div>
<div class="a" style="left:254px;top:749px;width:249px;height:69px;background:#fafafa"></div>
<div class="a dt" style="left:254px;top:756.6999999999999px;width:245.2px">Mar-15</div>
<div class="a" style="left:503px;top:749px;width:248px;height:69px;background:#fafafa"></div>
<div class="a dt" style="left:503px;top:756.6999999999999px;width:244.2px">Mar-16</div>
<div class="a cb" style="left:508px;top:757.1999999999999px"></div>
<div class="a" style="left:751px;top:749px;width:248px;height:69px;background:#fafafa"></div>
<div class="a dt" style="left:751px;top:756.6999999999999px;width:244.2px">Mar-17</div>
<div class="a cb" style="left:756px;top:757.1999999999999px"></div>
<div class="a" style="left:999px;top:749px;width:249px;height:69px;background:#fafafa"></div>
<div class="a dt" style="left:999px;top:756.6999999999999px;width:245.2px">Mar-18</div>
<div class="a cb" style="left:1004px;top:757.1999999999999px"></div>
<div class="a ev" style="left:1002px;top:779.5999999999999px;width:243.5px;height:20.5px;background:#80aed9"><div class="et" style="left:0.5px;top:4.6px"><b>(9)</b> J. Hubbard [PT], PTPN</div></div>
<div class="a" style="left:1248px;top:749px;width:248px;height:69px;background:#fafafa"></div>
<div class="a dt" style="left:1248px;top:756.6999999999999px;width:244.2px">Mar-19</div>
<div class="a cb" style="left:1253px;top:757.1999999999999px"></div>
<div class="a ev" style="left:1251px;top:779.5999999999999px;width:242.5px;height:20.5px;background:#eedcf0"><div class="et" style="left:0.5px;top:4.6px"><b>(10)</b> R. Damian, COTA [COTA], OTPN</div></div>
<div class="a" style="left:1496px;top:749px;width:248px;height:69px;background:#effefe"></div>
<div class="a dt" style="left:1496px;top:756.6999999999999px;width:244.2px">Mar-20</div>
<div class="a cb" style="left:1501px;top:757.1999999999999px"></div>
<div class="a ev" style="left:1499px;top:779.5999999999999px;width:242.5px;height:20.5px;background:#80aed9"><div class="et" style="left:0.5px;top:4.6px"><b>(11)</b> J. Hubbard [PT], PTPN</div></div>
<div class="a" style="left:1744px;top:749px;width:249px;height:69px;background:#effefe"></div>
<div class="a dt" style="left:1744px;top:756.6999999999999px;width:245.2px">Mar-21</div>
<div class="a cb" style="left:1749px;top:757.1999999999999px"></div>
<div class="a wl" style="left:255px;top:750px;width:60px;height:25px"><span style="top:5.9px;left:2.2px">W5</span></div>
<div class="a cb" style="left:280.3px;top:755.8px"></div>
<div class="a" style="left:254px;top:818px;width:249px;height:68px;background:#effefe"></div>
<div class="a dt" style="left:254px;top:825.9px;width:245.2px">Mar-22</div>
<div class="a" style="left:503px;top:818px;width:248px;height:68px;background:#effefe"></div>
<div class="a dt" style="left:503px;top:825.9px;width:244.2px">Mar-23</div>
<div class="a cb" style="left:508px;top:826.4px"></div>
<div class="a" style="left:751px;top:818px;width:248px;height:68px;background:#effefe"></div>
<div class="a dt" style="left:751px;top:825.9px;width:244.2px">Mar-24</div>
<div class="a cb" style="left:756px;top:826.4px"></div>
<div class="a" style="left:999px;top:818px;width:249px;height:68px;background:#effefe"></div>
<div class="a dt" style="left:999px;top:825.9px;width:245.2px">Mar-25</div>
<div class="a cb" style="left:1004px;top:826.4px"></div>
<div class="a ev" style="left:1002px;top:848.8px;width:243.5px;height:20.5px;background:#80aed9"><div class="et" style="left:0.5px;top:4.6px"><b>(12)</b> J. Hubbard [PT], PTPN</div></div>
<div class="a" style="left:1248px;top:818px;width:248px;height:68px;background:#effefe"></div>
<div class="a dt" style="left:1248px;top:825.9px;width:244.2px">Mar-26</div>
<div class="a cb" style="left:1253px;top:826.4px"></div>
<div class="a ev" style="left:1251px;top:848.8px;width:242.5px;height:20.5px;background:#d4a5dd"><div class="et" style="left:0.5px;top:4.6px"><b>(13)</b> P. Sweitzer [OT], OTDC</div></div>
<div class="a" style="left:1496px;top:818px;width:248px;height:68px;background:#effefe"></div>
<div class="a dt" style="left:1496px;top:825.9px;width:244.2px">Mar-27</div>
<div class="a cb" style="left:1501px;top:826.4px"></div>
<div class="a ev" style="left:1499px;top:848.8px;width:242.5px;height:20.5px;background:#80aed9"><div class="et" style="left:0.5px;top:4.6px"><b>(14)</b> J. Hubbard [PT], PTPN</div></div>
<div class="a" style="left:1744px;top:818px;width:249px;height:68px;background:#effefe"></div>
<div class="a dt" style="left:1744px;top:825.9px;width:245.2px">Mar-28</div>
<div class="a cb" style="left:1749px;top:826.4px"></div>
<div class="a wl" style="left:255px;top:819px;width:60px;height:25px"><span style="top:5.9px;left:2.2px">W6</span></div>
<div class="a cb" style="left:280.3px;top:824.8px"></div>
<div class="a" style="left:254px;top:886px;width:249px;height:69px;background:#effefe"></div>
<div class="a dt" style="left:254px;top:894.0px;width:245.2px">Mar-29</div>
<div class="a" style="left:503px;top:886px;width:248px;height:69px;background:#effefe"></div>
<div class="a dt" style="left:503px;top:894.0px;width:244.2px">Mar-30</div>
<div class="a cb" style="left:508px;top:894.5px"></div>
<div class="a" style="left:751px;top:886px;width:248px;height:69px;background:#effefe"></div>
<div class="a dt" style="left:751px;top:894.0px;width:244.2px">Mar-31</div>
<div class="a cb" style="left:756px;top:894.5px"></div>
<div class="a" style="left:999px;top:886px;width:249px;height:69px;background:#effefe"></div>
<div class="a dt" style="left:999px;top:894.0px;width:245.2px">Apr-1</div>
<div class="a cb" style="left:1004px;top:894.5px"></div>
<div class="a ev" style="left:1002px;top:916.9px;width:243.5px;height:20.5px;background:#80aed9"><div class="et" style="left:0.5px;top:4.6px"><b>(15)</b> J. Hubbard [PT], PT/DC</div></div>
<div class="a" style="left:1248px;top:886px;width:248px;height:69px;background:#effefe"></div>
<div class="a dt" style="left:1248px;top:894.0px;width:244.2px">Apr-2</div>
<div class="a cb" style="left:1253px;top:894.5px"></div>
<div class="a" style="left:1496px;top:886px;width:248px;height:69px;background:#effefe"></div>
<div class="a dt" style="left:1496px;top:894.0px;width:244.2px">Apr-3</div>
<div class="a cb" style="left:1501px;top:894.5px"></div>
<div class="a" style="left:1744px;top:886px;width:249px;height:69px;background:#effefe"></div>
<div class="a dt" style="left:1744px;top:894.0px;width:245.2px">Apr-4</div>
<div class="a cb" style="left:1749px;top:894.5px"></div>
<div class="a wl" style="left:255px;top:887px;width:60px;height:25px"><span style="top:5.9px;left:2.2px">W7</span></div>
<div class="a cb" style="left:280.3px;top:892.8px"></div>
<div class="a" style="left:254px;top:955px;width:249px;height:68px;background:#effefe"></div>
<div class="a dt" style="left:254px;top:963.0px;width:245.2px">Apr-5</div>
<div class="a" style="left:503px;top:955px;width:248px;height:68px;background:#effefe"></div>
<div class="a dt" style="left:503px;top:963.0px;width:244.2px">Apr-6</div>
<div class="a cb" style="left:508px;top:963.5px"></div>
<div class="a" style="left:751px;top:955px;width:248px;height:68px;background:#effefe"></div>
<div class="a dt" style="left:751px;top:963.0px;width:244.2px">Apr-7</div>
<div class="a cb" style="left:756px;top:963.5px"></div>
<div class="a" style="left:999px;top:955px;width:249px;height:68px;background:#effefe"></div>
<div class="a dt" style="left:999px;top:963.0px;width:245.2px">Apr-8</div>
<div class="a cb" style="left:1004px;top:963.5px"></div>
<div class="a" style="left:1248px;top:955px;width:248px;height:68px;background:#effefe"></div>
<div class="a dt" style="left:1248px;top:963.0px;width:244.2px">Apr-9</div>
<div class="a cb" style="left:1253px;top:963.5px"></div>
<div class="a" style="left:1496px;top:955px;width:248px;height:68px;background:#effefe"></div>
<div class="a dt" style="left:1496px;top:963.0px;width:244.2px">Apr-10</div>
<div class="a cb" style="left:1501px;top:963.5px"></div>
<div class="a" style="left:1744px;top:955px;width:249px;height:68px;background:#effefe"></div>
<div class="a dt" style="left:1744px;top:963.0px;width:245.2px">Apr-11</div>
<div class="a cb" style="left:1749px;top:963.5px"></div>
<div class="a wl" style="left:255px;top:956px;width:60px;height:25px"><span style="top:5.9px;left:2.2px">W8</span></div>
<div class="a cb" style="left:280.3px;top:961.8px"></div>
<div class="a" style="left:254px;top:1023px;width:249px;height:68px;background:#effefe"></div>
<div class="a dt" style="left:254px;top:1030.9px;width:245.2px">Apr-12</div>
<div class="a" style="left:503px;top:1023px;width:248px;height:68px;background:#effefe"></div>
<div class="a dt" style="left:503px;top:1030.9px;width:244.2px">Apr-13</div>
<div class="a cb" style="left:508px;top:1031.4px"></div>
<div class="a" style="left:751px;top:1023px;width:248px;height:68px;background:#effefe"></div>
<div class="a dt" style="left:751px;top:1030.9px;width:244.2px">Apr-14</div>
<div class="a cb" style="left:756px;top:1031.4px"></div>
<div class="a" style="left:999px;top:1023px;width:249px;height:68px;background:#effefe"></div>
<div class="a dt" style="left:999px;top:1030.9px;width:245.2px">Apr-15</div>
<div class="a cb" style="left:1004px;top:1031.4px"></div>
<div class="a" style="left:1248px;top:1023px;width:248px;height:68px;background:#effefe"></div>
<div class="a dt" style="left:1248px;top:1030.9px;width:244.2px">Apr-16</div>
<div class="a cb" style="left:1253px;top:1031.4px"></div>
<div class="a" style="left:1496px;top:1023px;width:248px;height:68px;background:#effefe"></div>
<div class="a dt" style="left:1496px;top:1030.9px;width:244.2px">Apr-17</div>
<div class="a cb" style="left:1501px;top:1031.4px"></div>
<div class="a" style="left:1744px;top:1023px;width:249px;height:68px;background:#effefe"></div>
<div class="a dt" style="left:1744px;top:1030.9px;width:245.2px">Apr-18</div>
<div class="a cb" style="left:1749px;top:1031.4px"></div>
<div class="a wl" style="left:255px;top:1024px;width:60px;height:25px"><span style="top:5.9px;left:2.2px">W9</span></div>
<div class="a cb" style="left:280.3px;top:1029.8px"></div>
<div class="a" style="left:254px;top:422px;width:1px;height:640px;background:#dcdcdc"></div>
<div class="a" style="left:503px;top:422px;width:1px;height:640px;background:#dcdcdc"></div>
<div class="a" style="left:751px;top:422px;width:1px;height:640px;background:#dcdcdc"></div>
<div class="a" style="left:999px;top:422px;width:1px;height:640px;background:#dcdcdc"></div>
<div class="a" style="left:1248px;top:422px;width:1px;height:640px;background:#dcdcdc"></div>
<div class="a" style="left:1496px;top:422px;width:1px;height:640px;background:#dcdcdc"></div>
<div class="a" style="left:1744px;top:422px;width:1px;height:640px;background:#dcdcdc"></div>
<div class="a" style="left:1993px;top:422px;width:1px;height:640px;background:#dcdcdc"></div>
<div class="a" style="left:254px;top:422px;width:1740px;height:1px;background:#dcdcdc"></div>
<div class="a" style="left:254px;top:447px;width:1740px;height:1px;background:#dcdcdc"></div>
<div class="a" style="left:254px;top:515px;width:1740px;height:1px;background:#dcdcdc"></div>
<div class="a" style="left:254px;top:598px;width:1740px;height:1px;background:#dcdcdc"></div>
<div class="a" style="left:254px;top:681px;width:1740px;height:1px;background:#dcdcdc"></div>
<div class="a" style="left:254px;top:749px;width:1740px;height:1px;background:#dcdcdc"></div>
<div class="a" style="left:254px;top:818px;width:1740px;height:1px;background:#dcdcdc"></div>
<div class="a" style="left:254px;top:886px;width:1740px;height:1px;background:#dcdcdc"></div>
<div class="a" style="left:254px;top:955px;width:1740px;height:1px;background:#dcdcdc"></div>
<div class="a" style="left:254px;top:1023px;width:1740px;height:1px;background:#dcdcdc"></div>

<div id="sbtrack" class="a"></div>
<div id="sbthumb" class="a"></div>
</div>
</body></html>
